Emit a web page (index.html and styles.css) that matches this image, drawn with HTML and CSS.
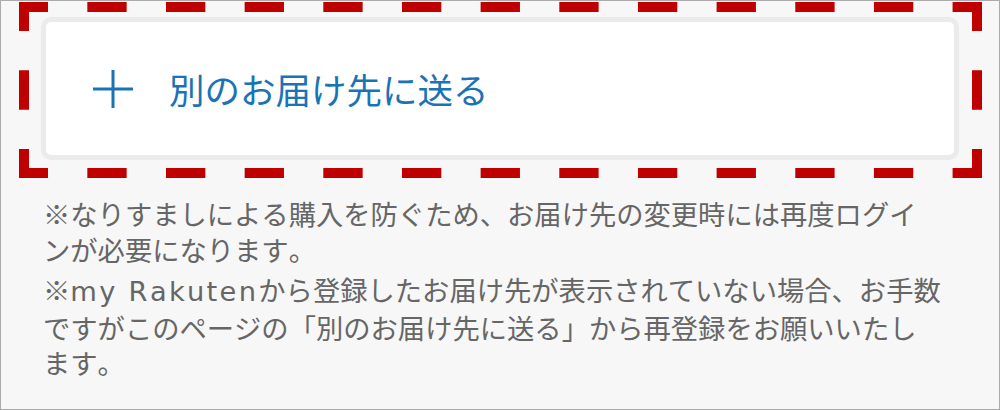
FILE: index.html
```html
<!DOCTYPE html>
<html lang="ja">
<head>
<meta charset="utf-8">
<link rel="stylesheet" href="styles.css">
</head>
<body>
<div class="frame">
  <div class="card">
    <svg class="plus" width="40" height="40" viewBox="0 0 40 40" aria-hidden="true">
      <path d="M0 20H40M20 1V39" stroke="#1a73b5" stroke-width="3" fill="none"/>
    </svg>
    <span class="label">別のお届け先に送る</span>
  </div>
  <div class="notes">
    <p>※なりすましによる購入を防ぐため、お届け先の変更時には再度ログイ<br>ンが必要になります。</p>
    <p>※<span class="latin">my Rakuten</span>から登録したお届け先が表示されていない場合、お手数<br>ですがこのページの「別のお届け先に送る」から再登録をお願いいたし<br>ます。</p>
  </div>
  <svg class="highlight" width="1000" height="410" viewBox="0 0 1000 410" aria-hidden="true">
    <g stroke="#bf0000" stroke-width="10" fill="none" stroke-dasharray="39.33 39.33" stroke-dashoffset="10.33">
      <path d="M19 7H982"/>
      <path d="M19 173H982"/>
      <path d="M24 2V178"/>
      <path d="M977 2V178"/>
    </g>
  </svg>
</div>
</body>
</html>
```
FILE: styles.css
```css
html, body {
  margin: 0;
  padding: 0;
}
body {
  font-family: "Noto Sans CJK JP", "Noto Sans", sans-serif;
  font-kerning: none;
  text-spacing-trim: space-all;
}
.frame {
  position: relative;
  box-sizing: border-box;
  width: 1000px;
  height: 410px;
  border: 1px solid #ababab;
  background: #f7f7f7;
  padding: 16px 40px 0 40px;
  overflow: hidden;
}
.card {
  box-sizing: border-box;
  height: 143px;
  border: 5px solid #ebebeb;
  border-radius: 10px;
  background: #fff;
  display: flex;
  align-items: center;
  padding-left: 47px;
  gap: 36px;
}
.plus {
  display: block;
  flex: none;
}
.label {
  color: #1a73b5;
  font-size: 35.5px;
  line-height: 1;
}
.notes {
  margin-top: 36px;
  width: 935px;
  padding-left: 2px;
  color: #666;
  font-size: 27.3px;
  line-height: 35.5px;
}
.notes p {
  margin: 0 0 5px 0;
}
.latin {
  font-family: "DejaVu Sans", sans-serif;
  letter-spacing: 2.3px;
}
.highlight {
  position: absolute;
  top: -1px;
  left: -1px;
  pointer-events: none;
}
```
